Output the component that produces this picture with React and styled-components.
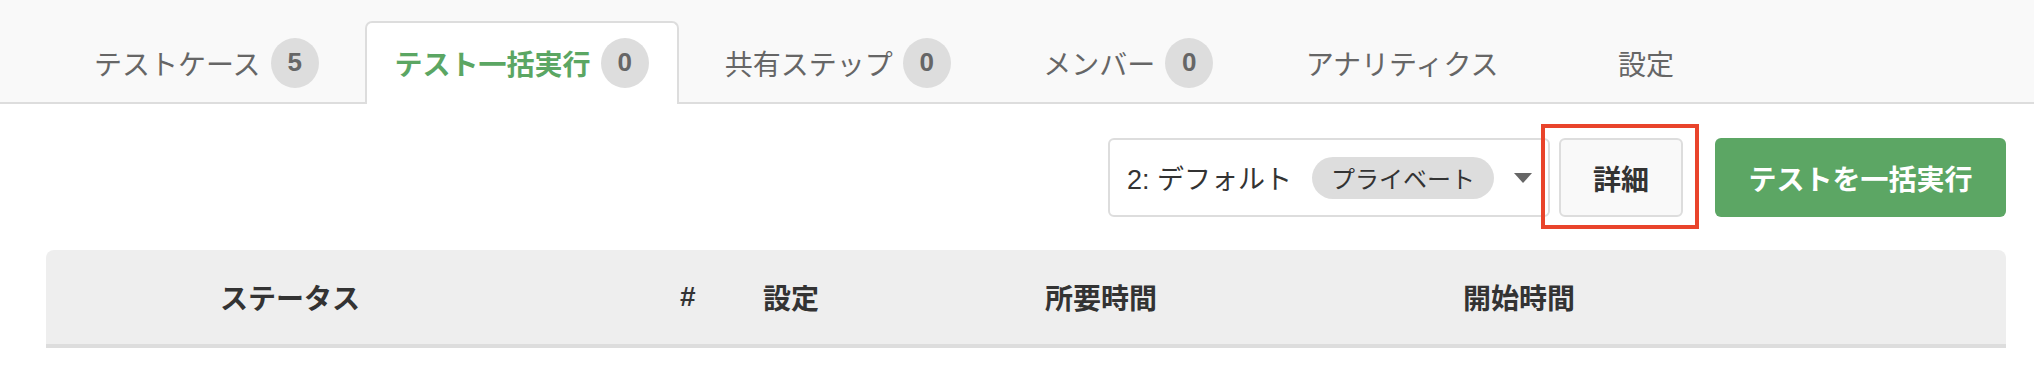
import React from 'react';
import styled, { createGlobalStyle } from 'styled-components';

const tabs = [
  { label: 'テストケース', count: 5 },
  { label: 'テスト一括実行', count: 0, active: true },
  { label: '共有ステップ', count: 0 },
  { label: 'メンバー', count: 0, min: 263 },
  { label: 'アナリティクス' },
  { label: '設定', min: 203 }
];

const columns = [
  { label: 'ステータス', width: '460px' },
  { label: '#', width: '83px' },
  { label: '設定', width: '282px' },
  { label: '所要時間', width: '418px' },
  { label: '開始時間', width: '1fr' }
];

function App() {
  return (
    <>
      <GlobalStyle />
      <Page>
        <TabBar>
          {tabs.map((tab) => (
            <Tab key={tab.label} $active={tab.active} $min={tab.min}>
              {tab.label}
              {tab.count !== undefined && <Badge>{tab.count}</Badge>}
            </Tab>
          ))}
        </TabBar>

        <Toolbar>
          <Select>
            <SelectLabel>2: デフォルト</SelectLabel>
            <Pill>プライベート</Pill>
            <Caret />
          </Select>
          <DetailWrap>
            <DetailButton>詳細</DetailButton>
            <Highlight />
          </DetailWrap>
          <RunButton>テストを一括実行</RunButton>
        </Toolbar>

        <TableHeader>
          {columns.map((col) => (
            <HeaderCell key={col.label}>{col.label}</HeaderCell>
          ))}
        </TableHeader>
      </Page>
    </>
  );
}

export default App;

const GlobalStyle = createGlobalStyle`
  html, body {
    margin: 0;
    padding: 0;
    background: #ffffff;
  }
  body {
    font-family: "Liberation Sans", "Noto Sans CJK JP", sans-serif;
    color: #333333;
  }
  * {
    box-sizing: border-box;
  }
`;

const Page = styled.div`
  width: 2034px;
  height: 366px;
  overflow: hidden;
`;

const TabBar = styled.div`
  display: flex;
  align-items: flex-end;
  height: 104px;
  padding-left: 64px;
  background-color: #f9f9f9;
  border-bottom: 2px solid #dddddd;
`;

const Tab = styled.div`
  display: flex;
  align-items: center;
  justify-content: center;
  gap: 10px;
  height: 83px;
  min-width: ${(p) => (p.$min ? `${p.$min}px` : 'auto')};
  margin-right: 16px;
  margin-bottom: -2px;
  padding: 0 28px 2px;
  font-size: 28px;
  font-weight: ${(p) => (p.$active ? 700 : 400)};
  color: ${(p) => (p.$active ? '#5ba663' : '#666666')};
  background-color: ${(p) => (p.$active ? '#ffffff' : 'transparent')};
  border: 2px solid ${(p) => (p.$active ? '#dddddd' : 'transparent')};
  border-bottom: none;
  border-radius: 7px 7px 0 0;
  white-space: nowrap;
`;

const Badge = styled.span`
  display: inline-flex;
  align-items: center;
  justify-content: center;
  width: 48px;
  height: 50px;
  border-radius: 50%;
  background-color: #dddddd;
  color: #666666;
  font-size: 26px;
  font-weight: 700;
`;

const Toolbar = styled.div`
  display: flex;
  justify-content: flex-end;
  align-items: center;
  margin-top: 34px;
  padding-right: 28px;
`;

const Select = styled.div`
  display: flex;
  align-items: center;
  width: 442px;
  height: 79px;
  padding-left: 17px;
  background-color: #ffffff;
  border: 2px solid #dddddd;
  border-radius: 6px;
`;

const SelectLabel = styled.span`
  font-size: 27px;
  color: #333333;
  white-space: nowrap;
`;

const Pill = styled.span`
  display: inline-flex;
  align-items: center;
  height: 42px;
  margin-left: 20px;
  padding: 0 19px;
  border-radius: 21px;
  background-color: #dddddd;
  font-size: 24px;
  color: #333333;
  white-space: nowrap;
`;

const Caret = styled.span`
  width: 0;
  height: 0;
  margin-left: 20px;
  border-left: 9px solid transparent;
  border-right: 9px solid transparent;
  border-top: 10px solid #666666;
`;

const DetailWrap = styled.div`
  position: relative;
  margin-left: 9px;
  margin-right: 32px;
`;

const DetailButton = styled.button`
  width: 124px;
  height: 79px;
  font-family: inherit;
  font-size: 28px;
  font-weight: 700;
  color: #333333;
  background-color: #f9f9f9;
  border: 2px solid #dddddd;
  border-radius: 6px;
`;

const Highlight = styled.div`
  position: absolute;
  top: -14px;
  bottom: -12px;
  left: -18px;
  right: -16px;
  border: 4px solid #e9442b;
  pointer-events: none;
`;

const RunButton = styled.button`
  width: 291px;
  height: 79px;
  font-family: inherit;
  font-size: 28px;
  font-weight: 700;
  color: #ffffff;
  background-color: #5ca664;
  border: none;
  border-radius: 6px;
`;

const TableHeader = styled.div`
  display: grid;
  grid-template-columns: ${columns.map((c) => c.width).join(' ')};
  align-items: center;
  height: 98px;
  margin: 33px 28px 0 46px;
  padding-left: 174px;
  background-color: #eeeeee;
  border-bottom: 4px solid #dddddd;
  border-radius: 8px 8px 0 0;
`;

const HeaderCell = styled.div`
  font-size: 28px;
  font-weight: 700;
  color: #333333;
  white-space: nowrap;
`;
